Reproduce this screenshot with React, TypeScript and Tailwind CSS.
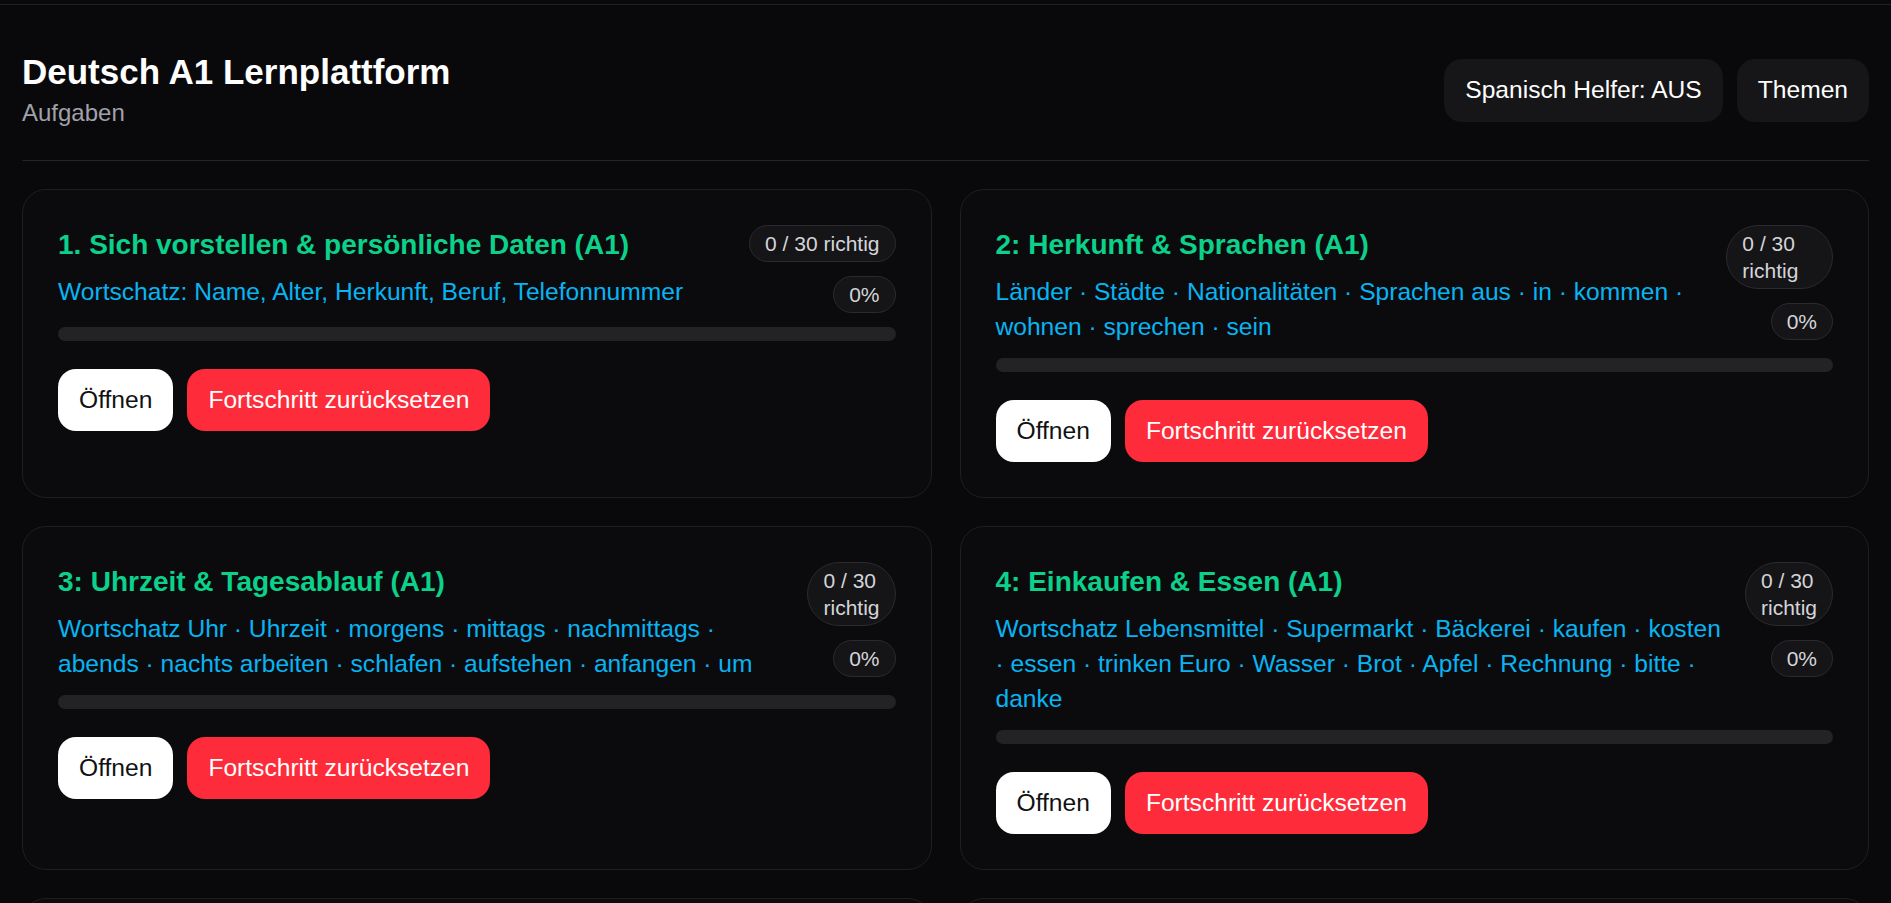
import React from 'react';

type Topic = {
  title: string;
  words: string;
  done: number;
  total: number;
};

const topics: Topic[] = [
  {
    title: '1. Sich vorstellen & persönliche Daten (A1)',
    words: 'Wortschatz: Name, Alter, Herkunft, Beruf, Telefonnummer',
    done: 0,
    total: 30,
  },
  {
    title: '2: Herkunft & Sprachen (A1)',
    words: 'Länder · Städte · Nationalitäten · Sprachen aus · in · kommen · wohnen · sprechen · sein',
    done: 0,
    total: 30,
  },
  {
    title: '3: Uhrzeit & Tagesablauf (A1)',
    words: 'Wortschatz Uhr · Uhrzeit · morgens · mittags · nachmittags · abends · nachts arbeiten · schlafen · aufstehen · anfangen · um',
    done: 0,
    total: 30,
  },
  {
    title: '4: Einkaufen & Essen (A1)',
    words: 'Wortschatz Lebensmittel · Supermarkt · Bäckerei · kaufen · kosten · essen · trinken Euro · Wasser · Brot · Apfel · Rechnung · bitte · danke',
    done: 0,
    total: 30,
  },
  {
    title: '5: Familie & Freunde (A1)',
    words: 'Familie · Mutter · Vater · Bruder · Schwester · Freund · haben · heißen',
    done: 0,
    total: 30,
  },
  {
    title: '6: Wohnen & Möbel (A1)',
    words: 'Wohnung · Zimmer · Küche · Bad · Tisch · Stuhl · Bett · groß · klein',
    done: 0,
    total: 30,
  },
];

const TopicCard: React.FC<{ topic: Topic }> = ({ topic }) => {
  const pct = Math.round((topic.done / topic.total) * 100);
  return (
    <div className="rounded-3xl border border-[#1f1f23] bg-[#0b0b0e] p-[35px]">
      <div className="flex items-start justify-between gap-6">
        <div>
          <div className="text-[28px] font-bold leading-[40px] text-[#0bd18b]">{topic.title}</div>
          <div className="mt-[9px] text-[24.6px] leading-[35px] text-[#08b4f2]">{topic.words}</div>
        </div>
        <div className="flex flex-col items-end gap-[14px]">
          <div className="rounded-full border border-[#2a2a2f] bg-[#151518] px-[15px] py-1 text-[21px] leading-[27px] text-[#d4d4d8]">
            {topic.done} / {topic.total} richtig
          </div>
          <div className="rounded-full border border-[#2a2a2f] bg-[#151518] px-[15px] py-1 text-[21px] leading-[27px] text-[#d4d4d8]">
            {pct}%
          </div>
        </div>
      </div>
      <div className="mt-[14px] h-[14px] w-full overflow-hidden rounded-full bg-[#232326]">
        <div className="h-full rounded-full bg-[#0bd18b]" style={{ width: `${pct}%` }} />
      </div>
      <div className="mt-[28px] flex gap-[14px]">
        <button className="flex h-[62px] items-center rounded-[18px] bg-white px-[21px] text-[24.6px] text-[#111113]">
          Öffnen
        </button>
        <button className="flex h-[62px] items-center rounded-[18px] bg-[#fe2c3a] px-[21px] text-[24.6px] text-white">
          Fortschritt zurücksetzen
        </button>
      </div>
    </div>
  );
};

const App: React.FC = () => {
  return (
    <div className="h-screen overflow-hidden bg-[#09090b] font-['Liberation_Sans',Arial,sans-serif] text-white">
      <div className="h-[5px] border-b border-[#222226]" />
      <div className="px-[22px]">
        <div className="flex items-center justify-between border-b border-[#242428] pt-[47px] pb-[32px]">
          <div>
            <h1 className="text-[35px] font-bold leading-[40px] text-white">Deutsch A1 Lernplattform</h1>
            <div className="mt-[6px] text-[24px] leading-[30px] text-[#a1a1aa]">Aufgaben</div>
          </div>
          <div className="flex gap-[14px]">
            <button className="flex h-[63px] items-center rounded-[18px] bg-[#161618] px-[21px] text-[24.6px] text-white">
              Spanisch Helfer: AUS
            </button>
            <button className="flex h-[63px] items-center rounded-[18px] bg-[#161618] px-[21px] text-[24.6px] text-white">
              Themen
            </button>
          </div>
        </div>
        <div className="grid grid-cols-2 gap-7 pt-7">
          {topics.map((t) => (
            <TopicCard key={t.title} topic={t} />
          ))}
        </div>
      </div>
    </div>
  );
};

export default App;
